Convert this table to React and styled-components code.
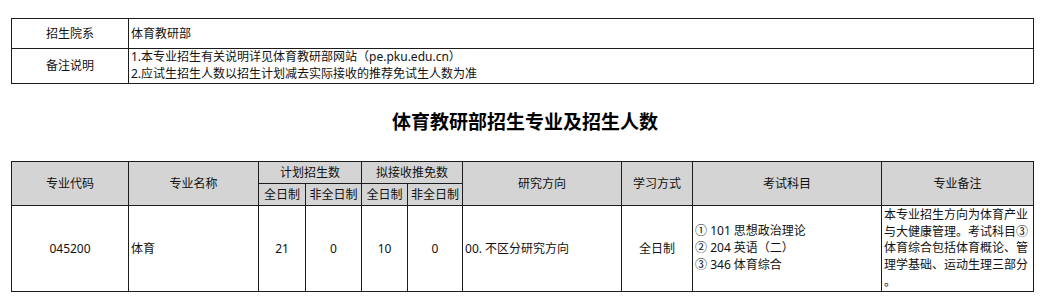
import styled, { createGlobalStyle } from "styled-components";

const GlobalStyle = createGlobalStyle`
    body {
        margin: 0;
        background: #fff;
        font-family: "Noto Sans", "Noto Sans CJK SC", sans-serif;
        color: #111;
    }
`;

const Page = styled.div`
    display: flex;
    flex-direction: column;
    padding: 18px 0 0 11px;
    width: 1022px;
`;

const Sheet = styled.table`
    border-collapse: collapse;
    table-layout: fixed;
    width: 1022px;
    font-size: 12px;
    line-height: 16px;
`;

const Row = styled.tr`
    height: ${(p) => p.$h}px;
`;

const Cell = styled.td`
    border: 1px solid #1c1c1c;
    padding: 0 2px;
    text-align: ${(p) => p.$align || "center"};
    vertical-align: ${(p) => p.$valign || "middle"};
    background: ${(p) => (p.$head ? "#d4d4d4" : "#fff")};
    white-space: ${(p) => (p.$wrap ? "normal" : "nowrap")};
    overflow: hidden;
`;

const Note = styled.div`
    height: 84px;
    overflow: hidden;
    line-height: 16.7px;
    padding-top: 1px;
    word-break: break-all;
    line-break: anywhere;
`;

const Lines = styled.div`
    line-height: 16.7px;
`;

const Title = styled.h1`
    margin: 0;
    height: 77px;
    display: flex;
    align-items: center;
    justify-content: center;
    font-family: "Noto Sans CJK SC", sans-serif;
    font-size: 19px;
    font-weight: 700;
    color: #000;
    padding-left: 6px;
    padding-bottom: 4px;
    box-sizing: border-box;
`;

const topCols = [117, 905];
const mainCols = [117, 130, 47, 56, 46, 55, 159, 71, 189, 152];

const App = () => {
    return (
        <>
            <GlobalStyle />
            <Page>
                <Sheet>
                    <colgroup>
                        {topCols.map((w, i) => (
                            <col key={i} style={{ width: w }} />
                        ))}
                    </colgroup>
                    <tbody>
                        <Row $h={30}>
                            <Cell>招生院系</Cell>
                            <Cell $align="left">体育教研部</Cell>
                        </Row>
                        <Row $h={35}>
                            <Cell>备注说明</Cell>
                            <Cell $align="left">
                                <Lines>
                                    1.本专业招生有关说明详见体育教研部网站（pe.pku.edu.cn）
                                    <br />
                                    2.应试生招生人数以招生计划减去实际接收的推荐免试生人数为准
                                </Lines>
                            </Cell>
                        </Row>
                    </tbody>
                </Sheet>

                <Title>体育教研部招生专业及招生人数</Title>

                <Sheet>
                    <colgroup>
                        {mainCols.map((w, i) => (
                            <col key={i} style={{ width: w }} />
                        ))}
                    </colgroup>
                    <tbody>
                        <Row $h={22}>
                            <Cell $head rowSpan={2}>专业代码</Cell>
                            <Cell $head rowSpan={2}>专业名称</Cell>
                            <Cell $head colSpan={2}>计划招生数</Cell>
                            <Cell $head colSpan={2}>拟接收推免数</Cell>
                            <Cell $head rowSpan={2}>研究方向</Cell>
                            <Cell $head rowSpan={2}>学习方式</Cell>
                            <Cell $head rowSpan={2}>考试科目</Cell>
                            <Cell $head rowSpan={2}>专业备注</Cell>
                        </Row>
                        <Row $h={22}>
                            <Cell $head>全日制</Cell>
                            <Cell $head>非全日制</Cell>
                            <Cell $head>全日制</Cell>
                            <Cell $head>非全日制</Cell>
                        </Row>
                        <Row $h={85}>
                            <Cell>045200</Cell>
                            <Cell $align="left">体育</Cell>
                            <Cell>21</Cell>
                            <Cell>0</Cell>
                            <Cell>10</Cell>
                            <Cell>0</Cell>
                            <Cell $align="left">00. 不区分研究方向</Cell>
                            <Cell>全日制</Cell>
                            <Cell $align="left">
                                <Lines>
                                    ① 101 思想政治理论
                                    <br />
                                    ② 204 英语（二）
                                    <br />
                                    ③ 346 体育综合
                                </Lines>
                            </Cell>
                            <Cell $align="left" $valign="top" $wrap>
                                <Note>
                                    本专业招生方向为体育产业与大健康管理。考试科目③体育综合包括体育概论、管理学基础、运动生理三部分。
                                </Note>
                            </Cell>
                        </Row>
                    </tbody>
                </Sheet>
            </Page>
        </>
    );
};

export default App;
